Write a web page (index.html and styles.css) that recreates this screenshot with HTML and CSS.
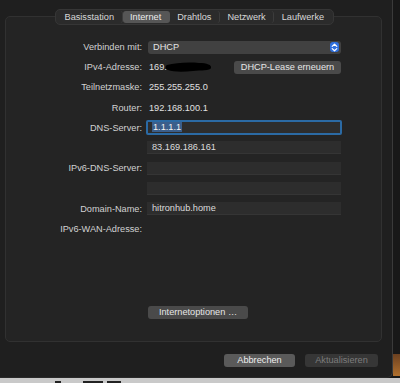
FILE: index.html
```html
<!DOCTYPE html>
<html lang="de">
<head>
    <meta charset="UTF-8">
    <title>Internet</title>
    <link rel="stylesheet" href="styles.css">
</head>
<body>

<div class="screen">
    <div class="window">
        <div class="panel">
            <div class="tabs">
                <span class="tab">Basisstation</span>
                <span class="tab active">Internet</span>
                <span class="tab">Drahtlos</span>
                <span class="tab">Netzwerk</span>
                <span class="tab last">Laufwerke</span>
            </div>

            <div class="form">
                <label>Verbinden mit:</label>
                <div class="popup">
                    <span>DHCP</span>
                    <span class="stepper">
                        <svg width="7" height="9" viewBox="0 0 7 9"><path d="M1.2 3.4 L3.5 1.2 L5.8 3.4 M1.2 5.6 L3.5 7.8 L5.8 5.6" fill="none" stroke="#fff" stroke-width="1.2" stroke-linecap="round" stroke-linejoin="round"/></svg>
                    </span>
                </div>

                <label>IPv4-Adresse:</label>
                <div class="value split">
                    <span class="ip">169.<svg class="scribble" width="48" height="11" viewBox="0 0 48 11"><path d="M2 3 C10 1 22 0 34 1 C42 1 47 3 46 6 C45 9 36 8 28 9 C18 10 8 10 3 8 C0 7 0 4 2 3 Z" fill="#000"/></svg></span>
                    <button class="btn">DHCP-Lease erneuern</button>
                </div>

                <label>Teilnetzmaske:</label>
                <div class="value">255.255.255.0</div>

                <label>Router:</label>
                <div class="value">192.168.100.1</div>

                <label>DNS-Server:</label>
                <div class="field focus"><span class="sel">1.1.1.1</span></div>

                <label></label>
                <div class="field">83.169.186.161</div>

                <label>IPv6-DNS-Server:</label>
                <div class="field"></div>

                <label></label>
                <div class="field"></div>

                <label>Domain-Name:</label>
                <div class="field">hitronhub.home</div>

                <label>IPv6-WAN-Adresse:</label>
                <div class="value"></div>
            </div>

            <div class="options">
                <button class="btn wide">Internetoptionen …</button>
            </div>
        </div>

        <div class="actions">
            <button class="btn cancel">Abbrechen</button>
            <button class="btn disabled">Aktualisieren</button>
        </div>
    </div>
    <div class="edge">
        <div class="photo"></div>
    </div>
</div>
<div class="desk">
    <i class="mark m1"></i><i class="mark m2"></i><i class="mark m3"></i>
</div>

</body>
</html>
```
FILE: styles.css
```css
body {
    margin: 0;
    background-color: #c9c9c9;
    font-family: 'Liberation Sans', Arial, sans-serif;
    font-size: 9.2px;
    color: #dcdcdc;
    overflow: hidden;
}
.screen {
    display: flex;
    height: 378px;
    background-color: #181818;
}
.window {
    width: 393px;
    height: 378px;
    box-sizing: border-box;
    background-color: #1f1f1f;
    border-right: 1px solid #3a3a3a;
    border-bottom: 1px solid #2a2a2a;
    border-bottom-right-radius: 6px;
    padding: 16px 10px 0 5px;
}
.edge {
    flex: 1;
    display: flex;
    flex-direction: column;
    justify-content: flex-end;
}
.photo {
    height: 22px;
    margin-bottom: 2px;
    background: linear-gradient(#6b4020, #b0702e);
}
.desk {
    display: flex;
    align-items: flex-end;
    height: 5px;
    background-color: #c9c9c9;
}
.mark {
    height: 2px;
    margin-left: 4px;
    background-color: #222;
}
.m1 {
    width: 6px;
    margin-left: 55px;
}
.m2 {
    width: 20px;
    margin-left: 22px;
}
.m3 {
    width: 14px;
}

/* Group box with the tab control on its top edge */
.panel {
    position: relative;
    width: 377px;
    height: 326px;
    box-sizing: border-box;
    background-color: #242424;
    border: 1px solid #313131;
    border-radius: 5px;
    padding: 23px 0 0 0;
    display: flex;
    flex-direction: column;
}
.tabs {
    position: absolute;
    top: -8px;
    left: 49px;
    display: flex;
    align-items: center;
    height: 16px;
    padding: 0 1px;
    background-color: #2b2b2b;
    border: 1px solid #363636;
    border-radius: 5px;
    box-sizing: border-box;
}
.tab {
    padding: 0 7.5px;
    height: 12px;
    line-height: 12px;
    color: #d8d8d8;
    border-right: 1px solid #3c3c3c;
    border-radius: 3px;
}
.tab.last {
    border-right: none;
}
.tab.active {
    background-color: #565656;
    border-right-color: transparent;
    color: #ececec;
}

.form {
    display: grid;
    grid-template-columns: 136px 194px;
    grid-auto-rows: 14px;
    column-gap: 5px;
    row-gap: 6.2px;
    align-items: center;
}
.form label {
    text-align: right;
    color: #d2d2d2;
}
.value {
    padding-left: 2px;
    color: #e0e0e0;
}
.value.split {
    display: flex;
    justify-content: space-between;
    align-items: center;
}
.ip {
    display: flex;
    align-items: center;
}
.scribble {
    margin-left: -2px;
}
.popup {
    display: flex;
    justify-content: space-between;
    align-items: center;
    height: 13px;
    margin-left: 1px;
    padding: 0 2px 0 5px;
    background-color: #414141;
    border-radius: 3px;
    color: #e4e4e4;
}
.stepper {
    display: flex;
    align-items: center;
    justify-content: center;
    width: 9px;
    height: 10px;
    background-color: #2f6fdc;
    border-radius: 3px;
}
.field {
    height: 13px;
    box-sizing: border-box;
    line-height: 13px;
    padding-left: 5px;
    background-color: #2d2d2d;
    border-bottom: 1px solid #353535;
    color: #dcdcdc;
}
.field.focus {
    margin: -1px -1px;
    height: 15px;
    line-height: 11px;
    padding-left: 4px;
    border: 2px solid #2b6aa4;
    border-radius: 2px;
}
.sel {
    background-color: #3b5e8a;
    color: #f4f4f4;
    padding: 0 1px;
}

.btn {
    font-family: inherit;
    font-size: 9.2px;
    height: 13px;
    line-height: 13px;
    padding: 0;
    border: none;
    border-radius: 3px;
    background-color: #4a4a4a;
    color: #e6e6e6;
}
.value.split .btn {
    width: 107px;
}
.options {
    margin-top: auto;
    padding: 0 0 22px 142px;
}
.btn.wide {
    width: 100px;
}
.actions {
    display: flex;
    justify-content: flex-end;
    gap: 10px;
    padding: 12px 4px 0 0;
}
.btn.cancel {
    width: 71px;
    background-color: #5a5a5a;
    color: #f0f0f0;
}
.btn.disabled {
    width: 73px;
    background-color: #363636;
    color: #7c7c7c;
}
```
